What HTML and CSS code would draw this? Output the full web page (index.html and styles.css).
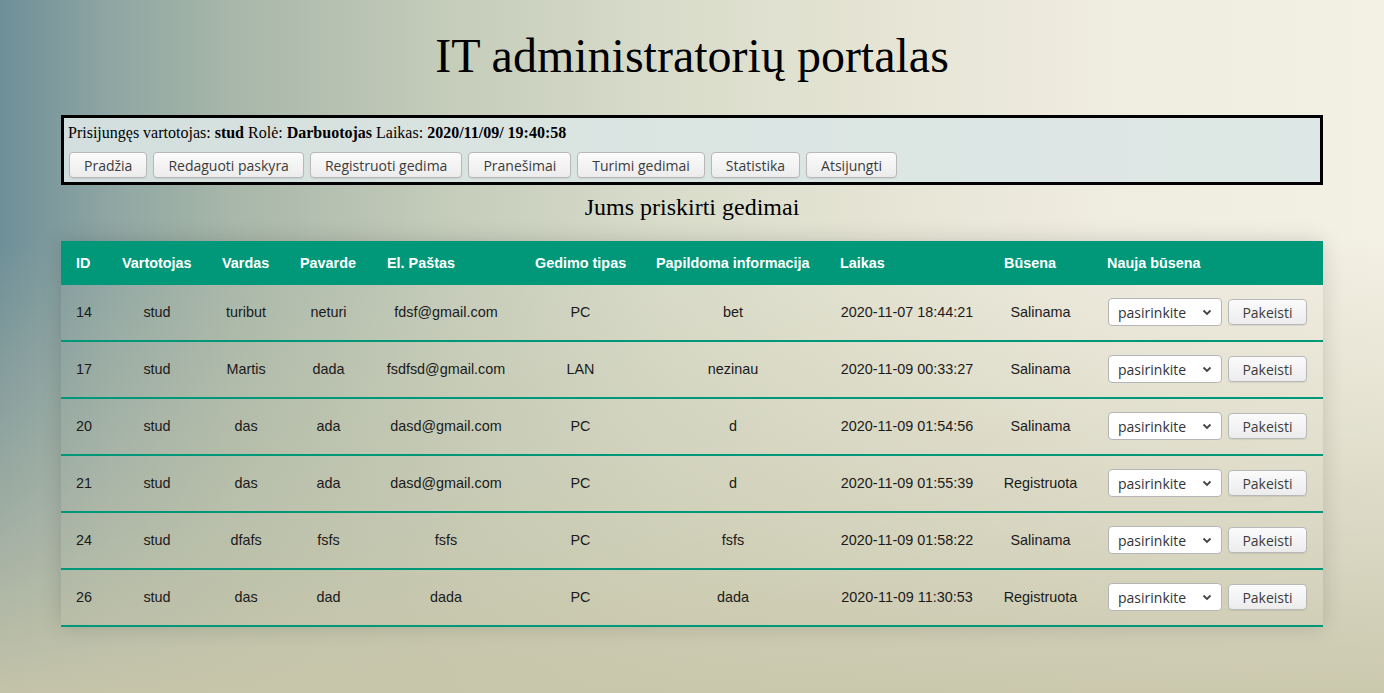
FILE: index.html
```html
<!DOCTYPE html>
<html lang="lt">
<head>
<meta charset="utf-8">
<title>IT administratorių portalas</title>
<link rel="stylesheet" href="styles.css">
</head>
<body>
<div class="page">
  <h1 class="title">IT administratorių portalas</h1>
  <div class="info">
    <div class="info-line">Prisijungęs vartotojas: <b>stud</b> Rolė: <b>Darbuotojas</b> Laikas: <b>2020/11/09/ 19:40:58</b></div>
    <div class="nav">
      <button class="btn">Pradžia</button>
      <button class="btn">Redaguoti paskyra</button>
      <button class="btn">Registruoti gedima</button>
      <button class="btn">Pranešimai</button>
      <button class="btn">Turimi gedimai</button>
      <button class="btn">Statistika</button>
      <button class="btn">Atsijungti</button>
    </div>
  </div>
  <h2 class="subtitle">Jums priskirti gedimai</h2>
  <table class="faults">
    <thead>
      <tr>
        <th class="c-id">ID</th>
        <th class="c-user">Vartotojas</th>
        <th class="c-name">Vardas</th>
        <th class="c-sur">Pavarde</th>
        <th class="c-mail">El. Paštas</th>
        <th class="c-type">Gedimo tipas</th>
        <th class="c-info">Papildoma informacija</th>
        <th class="c-time">Laikas</th>
        <th class="c-state">Būsena</th>
        <th class="c-new">Nauja būsena</th>
      </tr>
    </thead>
    <tbody>
      <tr>
        <td>14</td><td>stud</td><td>turibut</td><td>neturi</td><td>fdsf@gmail.com</td><td>PC</td><td>bet</td><td>2020-11-07 18:44:21</td><td>Salinama</td>
        <td class="act"><span class="sel"><select><option>pasirinkite</option></select><svg class="chev" width="10" height="7" viewBox="0 0 10 7"><path d="M1.5 1.5 L5 5 L8.5 1.5" fill="none" stroke="#444" stroke-width="1.8"/></svg></span><button class="btn small">Pakeisti</button></td>
      </tr>
      <tr>
        <td>17</td><td>stud</td><td>Martis</td><td>dada</td><td>fsdfsd@gmail.com</td><td>LAN</td><td>nezinau</td><td>2020-11-09 00:33:27</td><td>Salinama</td>
        <td class="act"><span class="sel"><select><option>pasirinkite</option></select><svg class="chev" width="10" height="7" viewBox="0 0 10 7"><path d="M1.5 1.5 L5 5 L8.5 1.5" fill="none" stroke="#444" stroke-width="1.8"/></svg></span><button class="btn small">Pakeisti</button></td>
      </tr>
      <tr>
        <td>20</td><td>stud</td><td>das</td><td>ada</td><td>dasd@gmail.com</td><td>PC</td><td>d</td><td>2020-11-09 01:54:56</td><td>Salinama</td>
        <td class="act"><span class="sel"><select><option>pasirinkite</option></select><svg class="chev" width="10" height="7" viewBox="0 0 10 7"><path d="M1.5 1.5 L5 5 L8.5 1.5" fill="none" stroke="#444" stroke-width="1.8"/></svg></span><button class="btn small">Pakeisti</button></td>
      </tr>
      <tr>
        <td>21</td><td>stud</td><td>das</td><td>ada</td><td>dasd@gmail.com</td><td>PC</td><td>d</td><td>2020-11-09 01:55:39</td><td>Registruota</td>
        <td class="act"><span class="sel"><select><option>pasirinkite</option></select><svg class="chev" width="10" height="7" viewBox="0 0 10 7"><path d="M1.5 1.5 L5 5 L8.5 1.5" fill="none" stroke="#444" stroke-width="1.8"/></svg></span><button class="btn small">Pakeisti</button></td>
      </tr>
      <tr>
        <td>24</td><td>stud</td><td>dfafs</td><td>fsfs</td><td>fsfs</td><td>PC</td><td>fsfs</td><td>2020-11-09 01:58:22</td><td>Salinama</td>
        <td class="act"><span class="sel"><select><option>pasirinkite</option></select><svg class="chev" width="10" height="7" viewBox="0 0 10 7"><path d="M1.5 1.5 L5 5 L8.5 1.5" fill="none" stroke="#444" stroke-width="1.8"/></svg></span><button class="btn small">Pakeisti</button></td>
      </tr>
      <tr>
        <td>26</td><td>stud</td><td>das</td><td>dad</td><td>dada</td><td>PC</td><td>dada</td><td>2020-11-09 11:30:53</td><td>Registruota</td>
        <td class="act"><span class="sel"><select><option>pasirinkite</option></select><svg class="chev" width="10" height="7" viewBox="0 0 10 7"><path d="M1.5 1.5 L5 5 L8.5 1.5" fill="none" stroke="#444" stroke-width="1.8"/></svg></span><button class="btn small">Pakeisti</button></td>
      </tr>
    </tbody>
  </table>
</div>
</body>
</html>
```
FILE: styles.css
```css
html, body {
  margin: 0;
  padding: 0;
  height: 100%;
}
body {
  font-family: "Liberation Serif", "Times New Roman", serif;
  color: #000;
  background:
    linear-gradient(to bottom, rgba(200, 199, 172, 0) 35%, rgba(200, 199, 172, 0.55) 75%, rgba(200, 198, 170, 0.95) 100%),
    linear-gradient(to right, #6e8f98 0%, #8fa6a3 8%, #a8b7a9 17%, #c6cdbb 33%, #d9dcca 48%, #e5e4d4 63%, #efece0 80%, #f3f0e4 100%);
  overflow: hidden;
}
.page {
  width: 1262px;
  margin: 0 auto;
  padding-top: 28px;
}
.title {
  font-size: 48px;
  font-weight: normal;
  text-align: center;
  margin: 0 0 32px 0;
  line-height: 55px;
}
.info {
  border: 3px solid #000;
  background: rgba(218, 230, 228, 0.9);
  padding: 5px 3px 4px 3px;
}
.info-line {
  font-size: 16px;
  line-height: 19px;
  margin-left: 1px;
}
.nav {
  display: flex;
  gap: 6px;
  margin-top: 10px;
  padding-left: 2px;
}
.btn {
  font-family: "Open Sans", "Noto Sans", sans-serif;
  font-size: 14px;
  color: #3c3c3c;
  height: 26px;
  padding: 0 14px;
  border: 1px solid #b8b8b8;
  border-radius: 4px;
  background: linear-gradient(#fbfbfb, #ececec);
  box-shadow: 0 1px 1px rgba(0,0,0,0.08);
}
.subtitle {
  font-size: 24px;
  font-weight: normal;
  text-align: center;
  margin: 8px 0 0 0;
  line-height: 28px;
}
.faults {
  width: 1262px;
  margin-top: 20px;
  border-collapse: collapse;
  table-layout: fixed;
  font-family: "Liberation Sans", Arial, sans-serif;
  font-size: 14.4px;
  box-shadow: 0 0 20px rgba(0, 0, 0, 0.15);
}
.faults th {
  box-sizing: border-box;
  background: #009879;
  color: #fff;
  font-weight: bold;
  text-align: left;
  padding: 0 15px;
  height: 44px;
  white-space: nowrap;
}
.faults td {
  text-align: center;
  padding: 0 0 1px 0;
  height: 54px;
  color: #1a1a1a;
}
.faults tbody tr {
  border-bottom: 2px solid #009879;
}
.c-id { width: 46px; }
.c-user { width: 100px; }
.c-name { width: 78px; }
.c-sur { width: 87px; }
.c-mail { width: 148px; }
.c-type { width: 121px; }
.c-info { width: 184px; }
.c-time { width: 164px; }
.c-state { width: 103px; }
.c-new { width: 231px; }
.faults td.act {
  text-align: left;
  padding-left: 16px;
}
.act {
  white-space: nowrap;
}
.sel {
  position: relative;
  display: inline-block;
  vertical-align: middle;
}
.sel select {
  -webkit-appearance: none;
  appearance: none;
  width: 114px;
  height: 28px;
  padding: 0 0 0 9px;
  font-family: "Open Sans", "Noto Sans", sans-serif;
  font-size: 14px;
  color: #333;
  background: #fff;
  border: 1px solid #b5b5b5;
  border-radius: 4px;
}
.chev {
  position: absolute;
  right: 10px;
  top: 11px;
  pointer-events: none;
}
.btn.small {
  vertical-align: middle;
  margin-left: 6px;
  width: 79px;
  padding: 0;
}
```
